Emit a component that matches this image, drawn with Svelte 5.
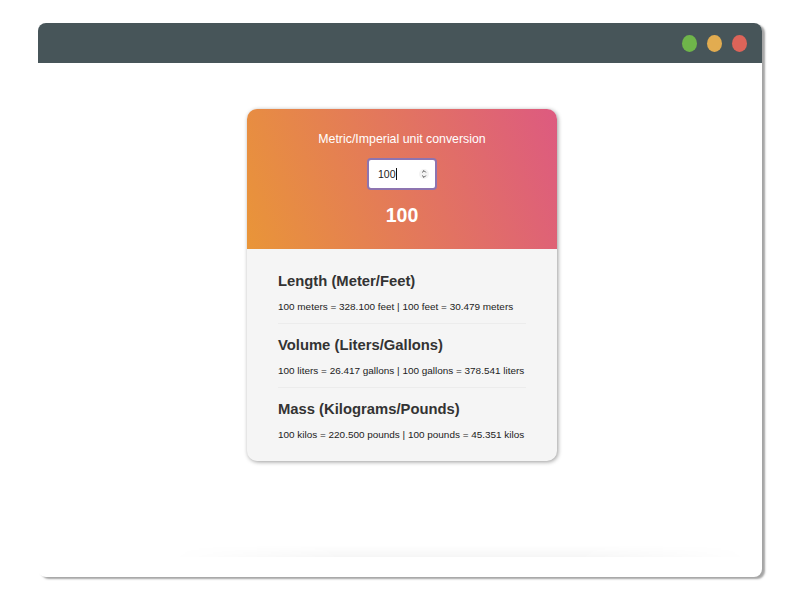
<script>
  let amount = 100;

  // same factors as the numbers shown in the card
  const sections = [
    { title: "Length (Meter/Feet)", text: "100 meters = 328.100 feet | 100 feet = 30.479 meters" },
    { title: "Volume (Liters/Gallons)", text: "100 liters = 26.417 gallons | 100 gallons = 378.541 liters" },
    { title: "Mass (Kilograms/Pounds)", text: "100 kilos = 220.500 pounds | 100 pounds = 45.351 kilos" }
  ];
</script>

<div class="page">
  <div class="window">
    <div class="titlebar">
      <span class="dot green"></span>
      <span class="dot yellow"></span>
      <span class="dot red"></span>
    </div>
    <div class="content">
      <div class="card">
        <div class="head">
          <p class="label">Metric/Imperial unit conversion</p>
          <div class="input">
            <span class="value">{amount}</span><span class="caret"></span>
            <svg class="spin" width="10" height="14" viewBox="0 0 10 14">
              <circle cx="5" cy="7" r="5" fill="#f3f3f3" />
              <path d="M3.2 5.4 5 3.6l1.8 1.8M3.2 8.6 5 10.4l1.8-1.8" fill="none" stroke="#333" stroke-width="0.9" />
            </svg>
          </div>
          <h1>{amount}</h1>
        </div>
        <div class="body">
          {#each sections as s, i}
            <div class={i < sections.length - 1 ? "section ruled" : "section"}>
              <h2>{s.title}</h2>
              <p>{s.text}</p>
            </div>
          {/each}
        </div>
      </div>
      <div class="fade"></div>
    </div>
  </div>
</div>

<style>
  :global(body) {
    margin: 0;
    background: #fff;
  }

  .page {
    width: 800px;
    height: 600px;
    box-sizing: border-box;
    padding: 23px 38px;
    font-family: "Liberation Sans", Arial, sans-serif;
  }

  .window {
    height: 554px;
    display: flex;
    flex-direction: column;
    background: #fff;
    border-radius: 8px;
    box-shadow: 3px 2px 2px rgba(90, 90, 90, 0.55);
    overflow: hidden;
  }

  .titlebar {
    height: 40px;
    flex: none;
    display: flex;
    justify-content: flex-end;
    align-items: center;
    gap: 10px;
    padding-right: 15px;
    background: #475559;
  }

  .dot {
    width: 15px;
    height: 17px;
    border-radius: 50%;
  }
  .green { background: #6fb54a; }
  .yellow { background: #e2ac50; }
  .red { background: #dd6459; }

  .content {
    flex: 1;
    display: flex;
    flex-direction: column;
    align-items: center;
    padding-top: 46px;
    padding-left: 4px;
  }

  .card {
    width: 310px;
    height: 352px;
    flex: none;
    border-radius: 10px;
    overflow: hidden;
    background: #f5f5f5;
    box-shadow: 1px 1px 4px rgba(0, 0, 0, 0.4);
  }

  .head {
    height: 140px;
    display: flex;
    flex-direction: column;
    align-items: center;
    color: #fff;
    background: linear-gradient(70deg, #e99538, #dd5a80);
  }

  .label {
    margin: 22px 0 0;
    font-size: 12.35px;
    line-height: 16px;
  }

  .input {
    width: 70px;
    height: 32px;
    margin-top: 11px;
    padding-left: 9px;
    box-sizing: border-box;
    display: flex;
    align-items: center;
    background: #fff;
    border: 2px solid #8d74b0;
    border-radius: 4px;
    color: #222;
    font-size: 10.5px;
  }

  .caret {
    width: 1px;
    height: 12px;
    margin-left: 0.5px;
    background: #111;
  }

  .spin {
    margin-left: 22px;
  }

  h1 {
    margin: 12.5px 0 0;
    font-size: 19.5px;
    line-height: 24px;
    font-weight: bold;
  }

  .body {
    padding: 10.5px 31px 0;
  }

  .section {
    padding: 12.5px 0 8.5px;
  }

  .section.ruled {
    border-bottom: 1px solid #ececec;
  }

  h2 {
    margin: 0;
    font-size: 14.8px;
    line-height: 18px;
    font-weight: bold;
    color: #333;
  }

  .section p {
    margin: 10px 0 0;
    font-size: 9.95px;
    line-height: 14px;
    color: #222;
  }

  .fade {
    width: 580px;
    height: 20px;
    margin-top: 76px;
    margin-left: 116px;
    flex: none;
    background: linear-gradient(to top, rgba(0, 0, 0, 0.035), transparent 60%);
    mask-image: linear-gradient(to right, transparent, #000 30%, #000 70%, transparent);
  }
</style>
